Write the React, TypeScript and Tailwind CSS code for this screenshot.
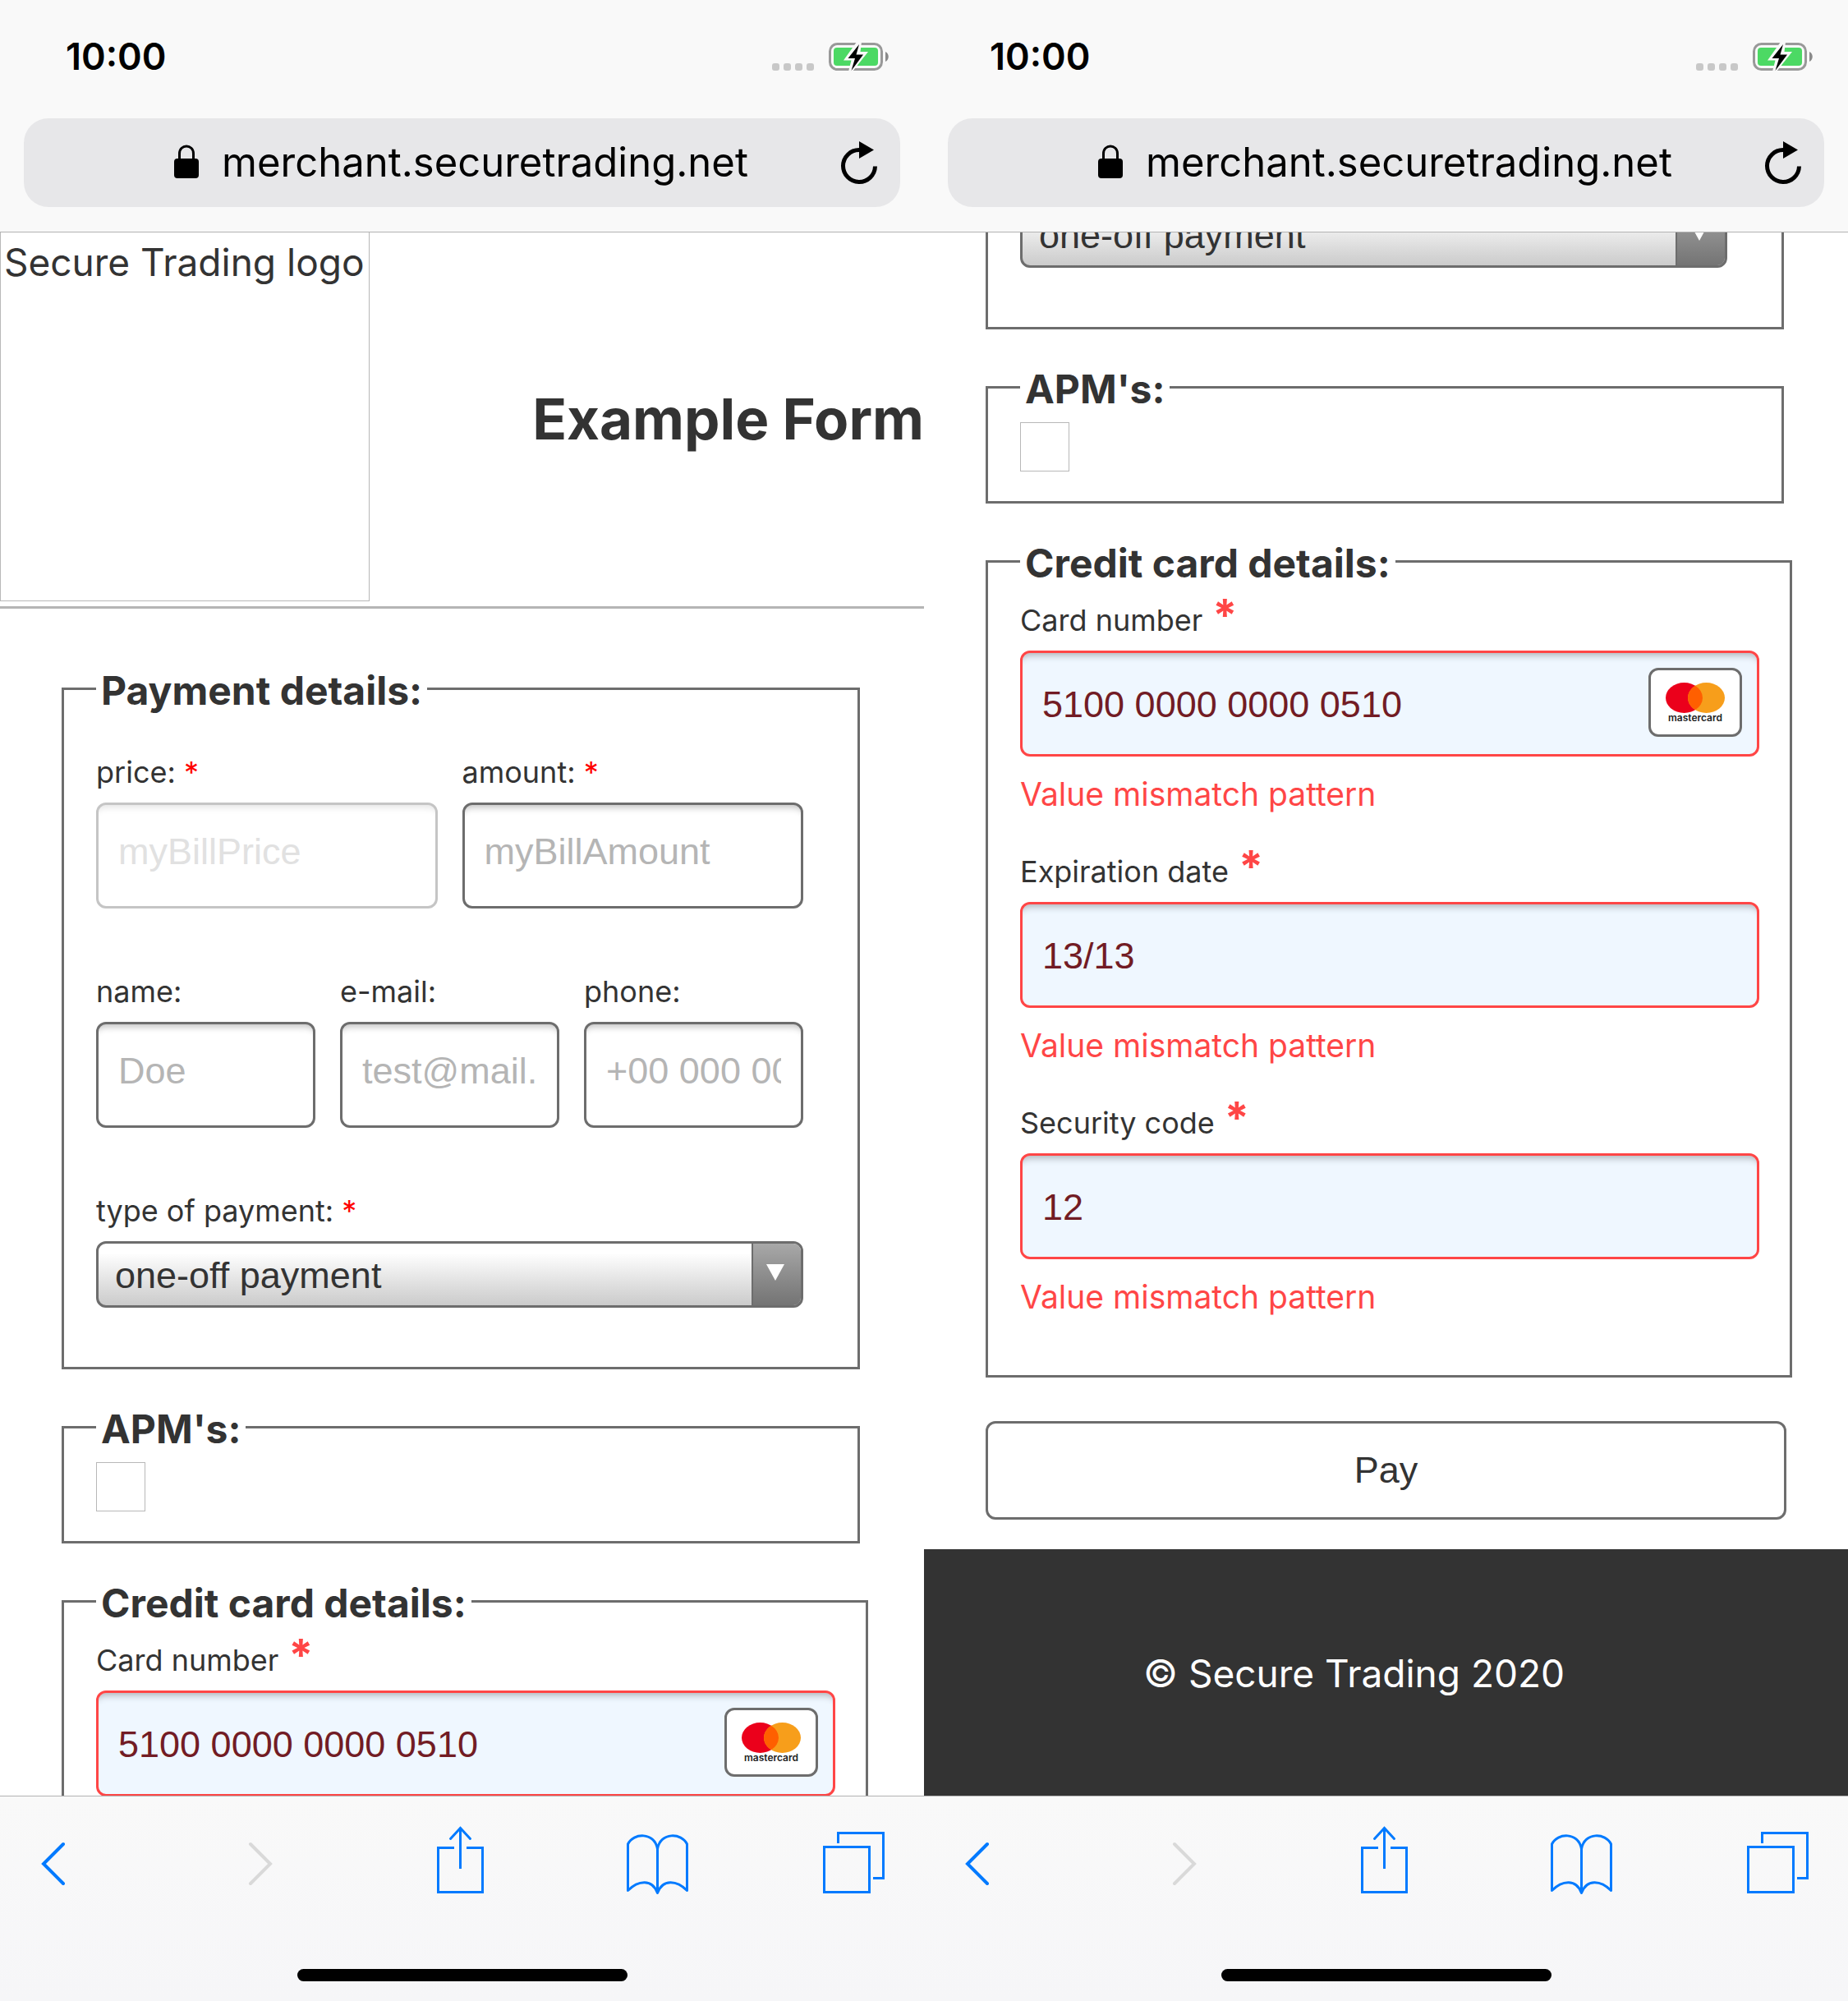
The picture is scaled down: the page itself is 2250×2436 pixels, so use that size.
import { useId, type ReactNode } from 'react'

function Battery() {
  return (
    <svg viewBox="0 0 74 36" className="h-9 w-[74px]" aria-hidden="true">
      <rect x="1.5" y="2.5" width="63" height="31" rx="9" fill="none" stroke="#999" strokeWidth="3" />
      <rect x="6" y="7" width="54" height="22" rx="4" fill="#4cd964" />
      <path d="M69 12c5 2 5 10 0 12z" fill="#8a8a8a" />
      <path d="M34 0 18 22.500h9.500L24 36h5L48 12H38.500L40 0z" fill="#f9f9f9" />
      <path d="M37 3 23.500 20H32l-4.500 15L42 15.500h-8.500z" fill="#000" />
    </svg>
  )
}

function BrowserTop() {
  return (
    <header className="flex h-[283px] shrink-0 flex-col border-b border-[#b2b2b2] bg-[#f9f9f9] text-black">
      <div className="flex h-36 items-center justify-between pl-20 pr-[42px]">
        <span className="mb-1.5 text-[45px] font-semibold leading-[56px]">10:00</span>
        <div className="flex items-center gap-[18px] pb-1.5">
          <div className="flex gap-[5px] pt-6">
            {[0, 1, 2, 3].map((i) => (
              <span key={i} className="size-[9px] rounded-[3px] bg-[#c8c8c8]" />
            ))}
          </div>
          <Battery />
        </div>
      </div>
      <div className="mx-[29px] flex h-[108px] items-center rounded-[30px] bg-[#e7e7e9] pr-7">
        <div className="flex flex-1 items-center justify-center gap-7 pl-[70px]">
          <svg viewBox="0 0 30 41" className="mb-1 h-[41px] w-[30px]" aria-hidden="true">
            <rect y="17" width="30" height="24" rx="4" />
            <path d="M6.500 18v-7c0-12 17-12 17 0v7" fill="none" stroke="#000" strokeWidth="3" />
          </svg>
          <span className="text-[49px] leading-[60px]">merchant.securetrading.net</span>
        </div>
        <button aria-label="Reload" type="button">
          <svg viewBox="0 0 44 52" className="h-[52px] w-11" aria-hidden="true">
            <path d="M22 10.500a19.500 19.500 0 1 0 19.500 20" fill="none" stroke="#000" strokeWidth="5" />
            <path d="M22 0v21l18-10.500z" />
          </svg>
        </button>
      </div>
    </header>
  )
}

function BrowserBottom() {
  return (
    <footer className="flex h-[250px] shrink-0 flex-col items-center justify-between border-t border-[#b2b2b2] bg-linear-to-b from-[#f9f9f9] to-[#f6f6f8] pb-6">
      <nav
        aria-label="Browser"
        className="grid w-full grid-cols-[252fr_231fr_232fr_239fr_75fr] justify-items-start px-12 pt-9 text-[#007aff]"
      >
        <button type="button" aria-label="Back">
          <svg viewBox="0 0 34 84" className="h-[84px] w-[34px]" fill="none" stroke="currentColor" strokeWidth="4" strokeLinecap="round" aria-hidden="true">
            <path d="M29 22 5 46l24 24" />
          </svg>
        </button>
        <button type="button" aria-label="Forward" disabled className="text-[#d9d9d9]">
          <svg viewBox="0 0 34 84" className="h-[84px] w-[34px]" fill="none" stroke="currentColor" strokeWidth="4" strokeLinecap="round" aria-hidden="true">
            <path d="m5 22 24 24L5 70" />
          </svg>
        </button>
        <button type="button" aria-label="Share">
          <svg viewBox="0 0 58 84" className="h-[84px] w-[58px]" fill="none" stroke="currentColor" strokeWidth="3" aria-hidden="true">
            <path d="M22 26.500H2.500v54h54v-54H37M29.500 52V3" />
            <path d="m17.500 15.500 12-13 12 13" strokeLinecap="round" />
          </svg>
        </button>
        <button type="button" aria-label="Bookmarks">
          <svg viewBox="0 0 76 84" className="h-[84px] w-[76px]" fill="none" stroke="currentColor" strokeWidth="3" strokeLinejoin="round" aria-hidden="true">
            <path d="M37.500 28C34 7 8 8 1.500 22v56.500C14 66 31 64 37.500 81.500 44 64 61 66 73.500 78.500V22C67 8 41 7 37.500 28v53" />
          </svg>
        </button>
        <button type="button" aria-label="Tabs">
          <svg viewBox="0 0 75 84" className="h-[84px] w-[75px]" fill="none" stroke="currentColor" strokeWidth="3" aria-hidden="true">
            <path d="M1.500 25.500h55v55h-55zM18.500 21V8.500h55v55H61" />
          </svg>
        </button>
      </nav>
      <span className="h-[15px] w-[402px] rounded-full bg-black" />
    </footer>
  )
}

function Group({ title, className, children }: { title: string; className: string; children: ReactNode }) {
  return (
    <fieldset className={`min-w-0 border-[3px] border-[#6d6d6d] pl-[39px] ${className}`}>
      <legend className="px-1.5 pt-[5px] text-[48px] font-bold leading-[56px]">{title}</legend>
      {children}
    </fieldset>
  )
}

function TextField({ label, placeholder, required, disabled }: { label: string; placeholder: string; required?: boolean; disabled?: boolean }) {
  const id = useId()
  return (
    <div className="flex min-w-0 flex-col gap-[13px]">
      <label htmlFor={id} className="text-[36px] leading-[48px]">
        {label} {required && <span className="text-[#f00]">*</span>}
      </label>
      <input
        id={id}
        placeholder={placeholder}
        disabled={disabled}
        className="h-[129px] w-full rounded-xl border-[3px] border-[#6d6d6d] bg-white px-6 pb-2.5 font-['Liberation_Sans',sans-serif] text-[45px] shadow-[inset_0_12px_9px_-9px_#c0c0c0] placeholder:text-[#b5b5b5] disabled:border-[#c5c5c5] disabled:shadow-[inset_0_12px_9px_-9px_#e4e4e4] disabled:placeholder:text-[#e1e1e1]"
      />
    </div>
  )
}

function PaymentSelect({ id }: { id?: string }) {
  return (
    <div className="relative">
      <select
        id={id}
        aria-label="type of payment"
        className="block h-[81px] w-full appearance-none rounded-xl border-[3px] border-[#6d6d6d] bg-linear-to-b from-white from-15% to-[#cbcbcb] px-5 pt-0.5 font-['Liberation_Sans',sans-serif] text-[45px]"
      >
        <option>one-off payment</option>
      </select>
      <span className="pointer-events-none absolute inset-y-[3px] right-[3px] flex w-[60px] items-center justify-center rounded-r-[9px] border-l-2 border-[#6d6d6d] bg-linear-to-b from-[#a8a8a8] to-[#747474] pb-1.5 pr-1">
        <svg viewBox="0 0 24 22" className="h-[22px] w-6" aria-hidden="true">
          <path d="M1 1h22L12 21z" fill="#fff" />
        </svg>
      </span>
    </div>
  )
}

function PaymentType() {
  const id = useId()
  return (
    <div className="flex flex-col gap-[13px]">
      <label htmlFor={id} className="text-[36px] leading-[48px]">
        type of payment: <span className="text-[#f00]">*</span>
      </label>
      <PaymentSelect id={id} />
    </div>
  )
}

function Mastercard() {
  return (
    <span className="pointer-events-none absolute right-[21px] top-[21px] flex h-[84px] w-[114px] flex-col items-center justify-center rounded-xl border-[3px] border-[#6d6d6d] bg-white">
      <svg viewBox="0 0 72 37" className="h-[37px] w-[72px]" aria-hidden="true">
        <ellipse cx="22.500" cy="18.500" rx="22.500" ry="18.500" fill="#eb001b" />
        <ellipse cx="49.500" cy="18.500" rx="22.500" ry="18.500" fill="#f79e1b" />
        <path d="M36 3.700a22.500 18.500 0 0 1 0 29.600 22.500 18.500 0 0 1 0-29.600z" fill="#ff5f00" />
      </svg>
      <span className="text-[12px] font-semibold leading-3 text-[#222]">mastercard</span>
    </span>
  )
}

function CardField({ label, value, badge, error }: { label: string; value: string; badge?: boolean; error?: string }) {
  const id = useId()
  return (
    <div>
      <label htmlFor={id} className="mb-[13px] flex h-12 items-start gap-3 text-[36px] leading-[48px]">
        {label}
        <span className="text-[54px] font-bold leading-[36px] text-[#ff4646]">*</span>
      </label>
      <div className="relative">
        <input
          id={id}
          defaultValue={value}
          className="block h-[129px] w-full rounded-xl border-[3px] border-[#ff4646] bg-[#eff7ff] px-6 pt-0.5 font-['Liberation_Sans',sans-serif] text-[45px] text-[#721c24] shadow-[inset_0_12px_9px_-9px_#aeb4ba]"
        />
        {badge && <Mastercard />}
      </div>
      {error && <p className="mt-[22px] text-[39px] leading-[48px] text-[#ff4646]">{error}</p>}
    </div>
  )
}

function Apms() {
  return (
    <Group title="APM's:" className="mr-[3px] pb-9 pt-3">
      <div className="size-[60px] border border-[#b8b8b8]" />
    </Group>
  )
}

function Screen({ children }: { children: ReactNode }) {
  return (
    <section className="flex h-screen min-w-0 flex-col overflow-hidden bg-white text-[#333]">
      <BrowserTop />
      {children}
      <BrowserBottom />
    </section>
  )
}

export default function App() {
  const mismatch = 'Value mismatch pattern'
  return (
    <div className="grid grid-cols-2 font-['Inter',sans-serif]">
      <Screen>
        <main className="min-h-0 flex-1 overflow-hidden">
          <div className="flex items-center justify-between border-b-[3px] border-[#b5b5b5] pb-1.5">
            <div className="h-[449px] w-[450px] whitespace-nowrap border border-t-0 border-[#b8b8b8] px-1 pt-2 text-[46px] leading-[56px]">
              Secure Trading logo
            </div>
            <h1 className="pt-1 text-[69px] font-bold leading-[84px]">Example Form</h1>
          </div>
          <form className="flex flex-col gap-10 px-[75px] pt-[67px]">
            <Group title="Payment details:" className="mr-[3px] pb-[72px] pr-[66px] pt-[47px]">
              <div className="flex flex-col gap-[77px]">
                <div className="grid grid-cols-2 gap-[30px]">
                  <TextField label="price:" placeholder="myBillPrice" required disabled />
                  <TextField label="amount:" placeholder="myBillAmount" required />
                </div>
                <div className="grid grid-cols-3 gap-[30px]">
                  <TextField label="name:" placeholder="Doe" />
                  <TextField label="e-mail:" placeholder="test@mail.com" />
                  <TextField label="phone:" placeholder="+00 000 000 000" />
                </div>
                <PaymentType />
              </div>
            </Group>
            <Apms />
            <Group title="Credit card details:" className="-mr-[7px] pb-[71px] pr-[37px] pt-[17px]">
              <CardField label="Card number" value="5100 0000 0000 0510" badge />
            </Group>
          </form>
        </main>
      </Screen>
      <Screen>
        <main className="flex min-h-0 flex-1 flex-col justify-end overflow-hidden">
          <form className="flex flex-col gap-10 px-[75px] pb-9">
            <fieldset
              aria-label="Payment details"
              className="mr-[3px] min-w-0 border-[3px] border-t-0 border-[#6d6d6d] pb-[72px] pl-[39px] pr-[66px]"
            >
              <PaymentSelect />
            </fieldset>
            <Apms />
            <Group title="Credit card details:" className="-mr-[7px] pb-[71px] pr-[37px] pt-[17px]">
              <div className="flex flex-col gap-[46px]">
                <CardField label="Card number" value="5100 0000 0000 0510" badge error={mismatch} />
                <CardField label="Expiration date" value="13/13" error={mismatch} />
                <CardField label="Security code" value="12" error={mismatch} />
              </div>
            </Group>
            <button
              type="button"
              className="mt-[13px] h-[120px] w-full rounded-xl border-[3px] border-[#6d6d6d] bg-white font-['Liberation_Sans',sans-serif] text-[45px]"
            >
              Pay
            </button>
          </form>
          <div className="flex h-[300px] shrink-0 items-center justify-center bg-[#333] pr-[78px] pt-0.5 text-[46px] text-white">
            © Secure Trading 2020
          </div>
        </main>
      </Screen>
    </div>
  )
}
